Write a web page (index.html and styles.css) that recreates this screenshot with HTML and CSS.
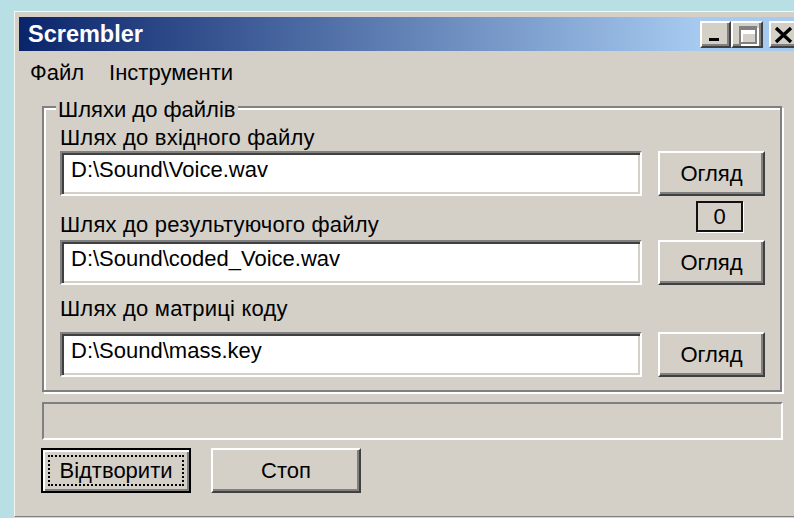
FILE: index.html
```html
<!DOCTYPE html>
<html lang="uk">
<head>
<meta charset="utf-8">
<title>Scrembler</title>
<link rel="stylesheet" href="styles.css">
</head>
<body>
<div class="window">
  <div class="titlebar">
    <span class="title">Scrembler</span>
    <div class="caption-buttons">
      <div class="cap-btn cap-min">
        <svg width="27" height="23" viewBox="0 0 27 23"><rect x="7" y="15" width="10" height="3" fill="#000"/></svg>
      </div>
      <div class="cap-btn cap-max">
        <svg width="28" height="23" viewBox="0 0 28 23">
          <path d="M8 5h18v18h-18z M10 11v10h14v-10z" fill="#fff" fill-rule="evenodd"/>
          <path d="M6 3h18v18h-18z M8 7v12h14v-12z" fill="#808080" fill-rule="evenodd"/>
        </svg>
      </div>
      <div class="cap-btn cap-close">
        <svg width="27" height="23" viewBox="0 0 27 23"><path d="M5 5L20 19M20 5L5 19" stroke="#000" stroke-width="3.4" fill="none"/></svg>
      </div>
    </div>
  </div>

  <div class="menubar">
    <span class="menu-item">Файл</span>
    <span class="menu-item">Інструменти</span>
  </div>

  <fieldset class="group">
    <legend class="group-title">Шляхи до файлів</legend>
    <div class="paths">
      <div class="label label-first">Шлях до вхідного файлу</div>
      <div class="spacer"></div>

      <div class="edit">D:\Sound\Voice.wav</div>
      <div class="btn">Огляд</div>

      <div class="label label-mid">Шлях до результуючого файлу</div>
      <div class="counter">0</div>

      <div class="edit">D:\Sound\coded_Voice.wav</div>
      <div class="btn">Огляд</div>

      <div class="label label-last">Шлях до матриці коду</div>
      <div class="spacer"></div>

      <div class="edit">D:\Sound\mass.key</div>
      <div class="btn">Огляд</div>
    </div>
  </fieldset>

  <div class="status"></div>

  <div class="actions">
    <div class="btn btn-wide btn-default"><span class="focus">Відтворити</span></div>
    <div class="btn btn-wide">Стоп</div>
  </div>
</div>
</body>
</html>
```

FILE: styles.css
```css
html, body {
  margin: 0;
  height: 518px;
  overflow: hidden;
}

body {
  background: #b8dfe3;
  padding: 11px 0 0 14px;
  box-sizing: border-box;
  font-family: "Liberation Sans", Arial, sans-serif;
  font-size: 22px;
  color: #000;
}

.window {
  box-sizing: border-box;
  width: 792px;
  height: 506px;
  background: #d4d0c8;
  border-top: 1px solid #f6f5f2;
  border-left: 1px solid #f6f5f2;
  border-bottom: 1px solid #808080;
  padding: 5px 4px 0 4px;
}

/* caption */
.titlebar {
  height: 34px;
  display: flex;
  align-items: center;
  background: linear-gradient(90deg, #0a246a 0, #a6caf0 680px);
  padding: 0 2px 0 9px;
}

.title {
  color: #fff;
  font-weight: bold;
  font-size: 23.5px;
  line-height: 34px;
}

.caption-buttons {
  margin-left: auto;
  display: flex;
}

.cap-btn {
  box-sizing: border-box;
  width: 31px;
  height: 27px;
  background: #d4d0c8;
  border: 2px solid;
  border-color: #fff #404040 #404040 #fff;
  box-shadow: inset -2px -2px #808080;
}

.cap-btn svg {
  display: block;
}

.cap-max {
  width: 32px;
}

.cap-close {
  margin-left: 6px;
}

/* menu */
.menubar {
  height: 40px;
  display: flex;
  gap: 25px;
  padding-left: 11px;
}

.menu-item {
  line-height: 26px;
  padding-top: 9px;
}

/* group box */
.group {
  box-sizing: border-box;
  width: 740px;
  margin: 0 0 0 23px;
  min-width: 0;
  border: 2px solid #808080;
  box-shadow: inset 2px 2px #fff, 2px 2px #fff;
  padding: 2px 15px 13px 16px;
}

.group-title {
  background: #d4d0c8;
  line-height: 26px;
  padding: 6px 2px 0;
  margin-left: -4px;
}

.paths {
  display: grid;
  grid-template-columns: 582px 107px;
  grid-template-rows: 26px 45px 44px 45px 47px 45px;
  column-gap: 16px;
}

.label {
  line-height: 26px;
  white-space: nowrap;
  letter-spacing: 0.2px;
}

.label-mid {
  align-self: end;
  margin-bottom: 2px;
}

.label-last {
  margin-top: 11px;
}

.edit {
  box-sizing: border-box;
  height: 45px;
  background: #fff;
  border: 2px solid;
  border-color: #808080 #fff #fff #808080;
  box-shadow: inset 2px 2px #404040, inset -2px -2px #d4d0c8;
  padding: 4px 9px 0;
  line-height: 26px;
  white-space: nowrap;
  overflow: hidden;
}

.counter {
  box-sizing: border-box;
  align-self: start;
  justify-self: start;
  width: 47px;
  height: 31px;
  margin: 5px 0 0 38px;
  border: 2px solid #111;
  box-shadow: 1px 1px #fff;
  text-align: center;
  line-height: 27px;
}

/* push buttons */
.btn {
  box-sizing: border-box;
  height: 45px;
  display: flex;
  align-items: center;
  justify-content: center;
  line-height: 26px;
  background: #d4d0c8;
  border: 2px solid;
  border-color: #fff #404040 #404040 #fff;
  box-shadow: inset -2px -2px #808080;
}

/* status strip */
.status {
  box-sizing: border-box;
  width: 741px;
  height: 38px;
  margin: 10px 0 0 23px;
  border: 2px solid;
  border-color: #808080 #fff #fff #808080;
}

.actions {
  display: flex;
  gap: 20px;
  margin: 8px 0 0 22px;
}

.btn-wide {
  width: 150px;
}

.btn-default {
  border-color: #000;
  box-shadow: inset 2px 2px #fff, inset -2px -2px #808080;
  padding: 5px;
  align-items: stretch;
}

.focus {
  flex: 1;
  display: flex;
  align-items: center;
  justify-content: center;
  border: 2px dotted #000;
}
```
